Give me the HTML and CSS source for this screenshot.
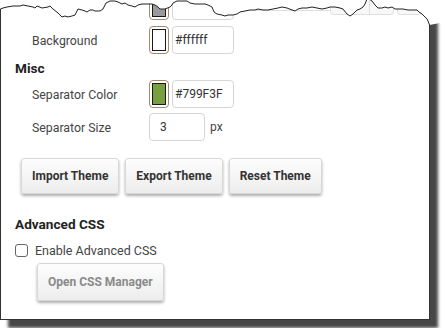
FILE: index.html
```html
<!DOCTYPE html>
<html>
<head>
<meta charset="utf-8">
<link rel="stylesheet" href="styles.css">
</head>
<body>
<div class="page">
  <div class="frame">
    <div class="row prev">
      <span class="label"></span>
      <span class="swatch"><span class="swatch-fill fill-gray"></span></span>
      <span class="field hex"></span>
    </div>
    <div class="row row-bg">
      <span class="label">Background</span>
      <span class="swatch"><span class="swatch-fill fill-white"></span></span>
      <span class="field hex">#ffffff</span>
    </div>
    <div class="section">Misc</div>
    <div class="row row-sepcolor">
      <span class="label">Separator Color</span>
      <span class="swatch"><span class="swatch-fill fill-green"></span></span>
      <span class="field hex">#799F3F</span>
    </div>
    <div class="row row-sepsize">
      <span class="label">Separator Size</span>
      <span class="field num">3</span>
      <span class="unit">px</span>
    </div>
    <div class="buttons">
      <button class="btn">Import Theme</button>
      <button class="btn">Export Theme</button>
      <button class="btn">Reset Theme</button>
    </div>
    <div class="section section-adv">Advanced CSS</div>
    <label class="check"><span class="box"></span><span>Enable Advanced CSS</span></label>
    <button class="btn btn-disabled">Open CSS Manager</button>
  </div>
  <svg class="tear" width="445" height="40" viewBox="0 0 445 40">
    <line x1="255" y1="18.5" x2="330" y2="18.5" class="ghost-line"/>
    <rect x="330.5" y="-5" width="63" height="27.5" rx="3" class="ghost"/>
    <line x1="369.5" y1="0" x2="369.5" y2="22" class="ghost-line"/>
    <rect x="397.5" y="-5" width="24" height="27.5" rx="3" class="ghost"/>
    <polygon class="paper" points="0,17 3,16 7,15 13,14 20,14 23,13 33,15 35,16 37,14 42,16 48,15 50,14 53,17 58,21 62,25 65,24 68,25 72,24 75,23 78,17 82,18 85,19 87,20 90,18 93,18 95,19 100,19 103,17 106,11 110,9 115,9 118,10 122,12 125,11 128,13 132,14 135,15 138,13 142,12 147,12 150,12 152,12 155,13 158,15 160,17 165,17 170,15 172,13 173,11 177,9 182,9 187,9 190,11 195,12 200,12 205,12 208,13 212,15 214,20 217,22 222,23 225,24 228,23 233,23 237,22 240,20 245,19 250,18 255,18 258,17 263,18 268,18 273,17 278,16 282,15 287,16 292,18 295,19 298,17 302,16 307,16 312,15 317,16 322,17 327,16 330,15 335,15 340,16 343,17 347,22 350,24 353,22 357,18 360,17 363,15 365,12 367,7 369,7 372,9 375,13 378,16 382,16 385,15 388,16 392,15 395,17 398,17 403,17 408,18 413,18 417,18 419,20 422,22 425,25 427,27 428,29 429.5,33 445,30 445,0 -2,0 -2,17"/>
    <polyline class="edge" points="0.5,17 3,16 7,15 13,14 20,14 23,13 33,15 35,16 37,14 42,16 48,15 50,14 53,17 58,21 62,25 65,24 68,25 72,24 75,23 78,17 82,18 85,19 87,20 90,18 93,18 95,19 100,19 103,17 106,11 110,9 115,9 118,10 122,12 125,11 128,13 132,14 135,15 138,13 142,12 147,12 150,12 152,12 155,13 158,15 160,17 165,17 170,15 172,13 173,11 177,9 182,9 187,9 190,11 195,12 200,12 205,12 208,13 212,15 214,20 217,22 222,23 225,24 228,23 233,23 237,22 240,20 245,19 250,18 255,18 258,17 263,18 268,18 273,17 278,16 282,15 287,16 292,18 295,19 298,17 302,16 307,16 312,15 317,16 322,17 327,16 330,15 335,15 340,16 343,17 347,22 350,24 353,22 357,18 360,17 363,15 365,12 367,7 369,7 372,9 375,13 378,16 382,16 385,15 388,16 392,15 395,17 398,17 403,17 408,18 413,18 417,18 419,20 422,22 425,25 427,27 428,29 429.5,33"/>
  </svg>
</div>
</body>
</html>
```

FILE: styles.css
```css
html, body {
  margin: 0;
  padding: 0;
  background: #ffffff;
}

body {
  font-family: Roboto, "Liberation Sans", sans-serif;
  font-size: 12px;
  color: #444;
  overflow: hidden;
}

.page {
  position: relative;
  width: 445px;
  height: 336px;
}

.frame {
  width: 430px;
  box-sizing: border-box;
  border: 1px solid #333;
  border-top: 0;
  padding: 0 0 18px 0;
  background: #fff;
  box-shadow: 8px 8px 3px rgba(0, 0, 0, 0.72);
}

.row {
  display: flex;
  align-items: center;
  height: 28px;
  padding-left: 31px;
}

.prev {
  margin-top: -8px;
}

.row-bg {
  margin-top: 6px;
}

.row-sepcolor {
  margin-top: 4px;
}

.row-sepsize {
  margin-top: 5px;
}

.label {
  width: 117px;
  flex: none;
  color: #444;
  font-size: 12.3px;
  line-height: 16px;
  padding-top: 1px;
}

.swatch {
  width: 20px;
  height: 28px;
  box-sizing: border-box;
  border: 1px solid #a48a6c;
  border-radius: 4px;
  padding: 2px;
  display: flex;
  flex: none;
  background: #fff;
}

.swatch-fill {
  flex: 1;
  border: 1px solid #1a1a1a;
}

.fill-gray { background: #9a9a9a; }
.fill-white { background: #ffffff; }
.fill-green { background: #799f3f; }

.field {
  height: 28px;
  box-sizing: border-box;
  border: 1px solid #d6d6d6;
  border-radius: 4px;
  background: #fff;
  color: #333;
  font-size: 12px;
  display: flex;
  align-items: center;
  flex: none;
}

.hex {
  width: 62px;
  margin-left: 3px;
  padding-left: 2px;
}

.num {
  width: 56px;
  padding-left: 10px;
}

.unit {
  margin-left: 5px;
  color: #444;
}

.section {
  font-weight: bold;
  font-size: 13.6px;
  line-height: 16px;
  color: #222;
  padding-left: 14px;
  margin-top: 6px;
}

.section-adv {
  margin-top: 22px;
}

.buttons {
  display: flex;
  gap: 6px;
  padding-left: 20px;
  margin-top: 17px;
}

.btn {
  height: 36px;
  padding: 0 10px;
  font-family: Roboto, "Liberation Sans", sans-serif;
  font-weight: bold;
  font-size: 12px;
  color: #333;
  background: linear-gradient(#fdfdfd, #ededed);
  border: 1px solid #d8d8d8;
  border-radius: 3px;
  box-shadow: 0 2px 3px rgba(0, 0, 0, 0.32);
}

.btn-disabled {
  display: block;
  height: 38px;
  margin: 5px 0 0 36px;
  color: #8a8a8a;
}

.check {
  display: flex;
  align-items: center;
  height: 16px;
  margin-top: 10px;
  padding-left: 14px;
  gap: 7px;
  color: #444;
  font-size: 12.5px;
}

.box {
  width: 13px;
  height: 13px;
  box-sizing: border-box;
  border: 1.5px solid #666;
  border-radius: 3px;
  background: #fff;
}

.tear {
  position: absolute;
  top: 0;
  left: 0;
  pointer-events: none;
}

.paper {
  fill: #ffffff;
  stroke: none;
}

.edge {
  fill: none;
  stroke: #222;
  stroke-width: 1;
}

.ghost {
  fill: #f8f8f8;
  stroke: #dedede;
  stroke-width: 1;
}

.ghost-line {
  stroke: #dedede;
  stroke-width: 1;
}
```
